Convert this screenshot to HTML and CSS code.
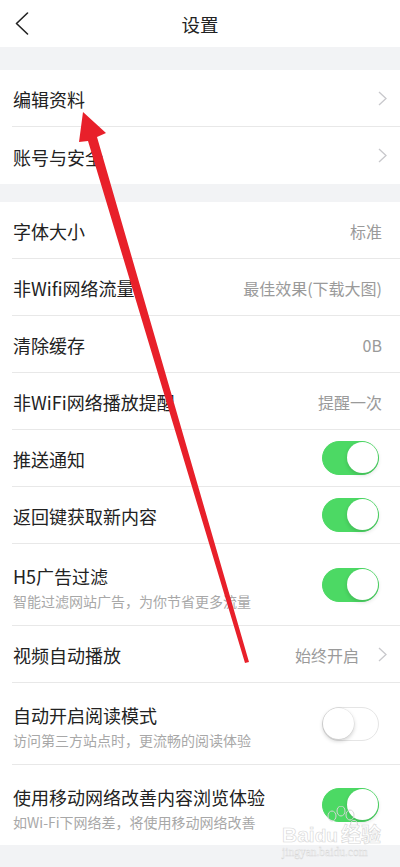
FILE: index.html
```html
<!DOCTYPE html>
<html lang="zh">
<head>
<meta charset="utf-8">
<title>设置</title>
<link rel="stylesheet" href="styles.css">
</head>
<body>
<div class="page">
  <header class="nav">
    <svg class="back" width="14" height="24" viewBox="0 0 14 24"><polyline points="12.5,1 1.5,11.5 12.5,22" fill="none" stroke="#222" stroke-width="1.6" stroke-linejoin="round" stroke-linecap="round"/></svg>
    <h1 class="title">设置</h1>
  </header>

  <section class="group first">
    <div class="row"><span class="label">编辑资料</span><span class="right"><svg class="chev" width="9" height="15" viewBox="0 0 9 15"><polyline points="1,1 8,7.5 1,14" fill="none" stroke="#c8c8cc" stroke-width="1.3"/></svg></span></div>
    <div class="row"><span class="label">账号与安全</span><span class="right"><svg class="chev" width="9" height="15" viewBox="0 0 9 15"><polyline points="1,1 8,7.5 1,14" fill="none" stroke="#c8c8cc" stroke-width="1.3"/></svg></span></div>
  </section>

  <section class="group second">
    <div class="row"><span class="label">字体大小</span><span class="value">标准</span></div>
    <div class="row"><span class="label">非Wifi网络流量</span><span class="value">最佳效果(下载大图)</span></div>
    <div class="row"><span class="label">清除缓存</span><span class="value">0B</span></div>
    <div class="row"><span class="label">非WiFi网络播放提醒</span><span class="value">提醒一次</span></div>
    <div class="row"><span class="label">推送通知</span><span class="switch on"><span class="knob"></span></span></div>
    <div class="row"><span class="label">返回键获取新内容</span><span class="switch on"><span class="knob"></span></span></div>
    <div class="row tall"><div class="texts"><span class="label">H5广告过滤</span><span class="sub">智能过滤网站广告，为你节省更多流量</span></div><span class="switch on"><span class="knob"></span></span></div>
    <div class="row"><span class="label">视频自动播放</span><span class="right"><span class="value inline">始终开启</span><svg class="chev" width="9" height="15" viewBox="0 0 9 15"><polyline points="1,1 8,7.5 1,14" fill="none" stroke="#c8c8cc" stroke-width="1.3"/></svg></span></div>
    <div class="row tall"><div class="texts"><span class="label">自动开启阅读模式</span><span class="sub">访问第三方站点时，更流畅的阅读体验</span></div><span class="switch"><span class="knob"></span></span></div>
    <div class="row tall last"><div class="texts"><span class="label">使用移动网络改善内容浏览体验</span><span class="sub">如Wi-Fi下网络差，将使用移动网络改善</span></div><span class="switch on"><span class="knob"></span></span></div>
  </section>

  <div class="watermark">
    <svg class="paw" width="40" height="30" viewBox="0 0 40 30">
      <g fill="none" stroke="#d6d6d6" stroke-width="1">
        <ellipse cx="12" cy="10" rx="4" ry="5"/>
        <ellipse cx="21" cy="5" rx="4" ry="5"/>
        <ellipse cx="30" cy="9" rx="4" ry="5"/>
        <ellipse cx="34" cy="19" rx="3.5" ry="4.5"/>
      </g>
    </svg>
    <div class="wm-main">Bai<span class="du">du</span><span class="jy">经验</span></div>
    <div class="wm-url">jingyan.baidu.com</div>
  </div>

  <svg class="arrow" width="400" height="867" viewBox="0 0 400 867">
    <polygon points="83,112 106,133 97,137 249,662 245,663 88,141 79,142" fill="#e8202a"/>
  </svg>
</div>
</body>
</html>
```

FILE: styles.css
```css
* { box-sizing: border-box; margin: 0; padding: 0; }
html, body { width: 400px; height: 867px; overflow: hidden; }
body {
  background: #f2f3f5;
  font-family: "Noto Sans CJK SC", "Noto Sans", sans-serif;
  color: #222;
}
.page { position: relative; width: 400px; height: 867px; }
.nav {
  height: 47px;
  background: #fff;
  display: flex;
  align-items: center;
  justify-content: center;
  position: relative;
}
.back { position: absolute; left: 15px; top: 12px; }
.title { font-size: 18.5px; font-weight: 400; color: #222; line-height: 1; margin-top: 2px; }

.group { background: #fff; }
.group.first { margin-top: 23px; }
.group.second { margin-top: 18px; }

.row {
  margin-left: 12px;
  padding-left: 1px;
  height: 57px;
  display: flex;
  align-items: center;
  justify-content: space-between;
  border-bottom: 1px solid #e8e8e8;
}
.row:last-child { border-bottom: none; }
.row.tall { height: 82px; }
.row.last { height: 80px; }

.label { font-size: 18px; line-height: 1; color: #222; padding-top: 2px; }
.value { font-size: 16px; line-height: 1; color: #9a9a9a; margin-right: 18px; padding-top: 2px; }
.value.inline { margin-right: 19px; }
.right { display: flex; align-items: center; margin-right: 13px; }
.chev { display: block; }

.texts { display: flex; flex-direction: column; gap: 9px; padding-top: 4px; }
.sub { font-size: 14px; line-height: 1; color: #a8a8a8; }

.switch {
  position: relative;
  width: 57px;
  height: 34px;
  border-radius: 17px;
  background: #fff;
  border: 1.5px solid #e5e5e5;
  margin-right: 21px;
  flex-shrink: 0;
}
.switch .knob {
  position: absolute;
  top: 0;
  left: 0;
  width: 31px;
  height: 31px;
  border-radius: 50%;
  background: #fff;
  box-shadow: 0 2px 4px rgba(0,0,0,0.2), 0 0 0 0.5px rgba(0,0,0,0.08);
}
.switch.on { background: #4cd964; border-color: #4cd964; }
.switch.on .knob { left: auto; right: 0; box-shadow: 0 2px 4px rgba(0,0,0,0.15); }

.watermark {
  position: absolute;
  left: 282px;
  top: 812px;
  white-space: nowrap;
  font-family: "Liberation Sans", Arial, sans-serif;
  pointer-events: none;
}
.paw { position: absolute; left: 38px; top: -6px; }
.wm-main {
  position: relative;
  margin-top: 12px;
  font-size: 21px;
  font-weight: 700;
  line-height: 1;
  color: rgba(255,255,255,0.85);
  -webkit-text-stroke: 0.6px #d6d6d6;
}
.wm-main .du { font-size: 19px; }
.wm-main .jy { font-family: "Noto Sans CJK SC", sans-serif; font-size: 20px; margin-left: 3px; }
.wm-url {
  margin-top: 2px;
  font-family: "Liberation Serif", serif;
  font-size: 11.5px;
  line-height: 1;
  color: rgba(255,255,255,0.85);
  -webkit-text-stroke: 0.4px #d6d6d6;
}

.arrow { position: absolute; left: 0; top: 0; pointer-events: none; }
```
